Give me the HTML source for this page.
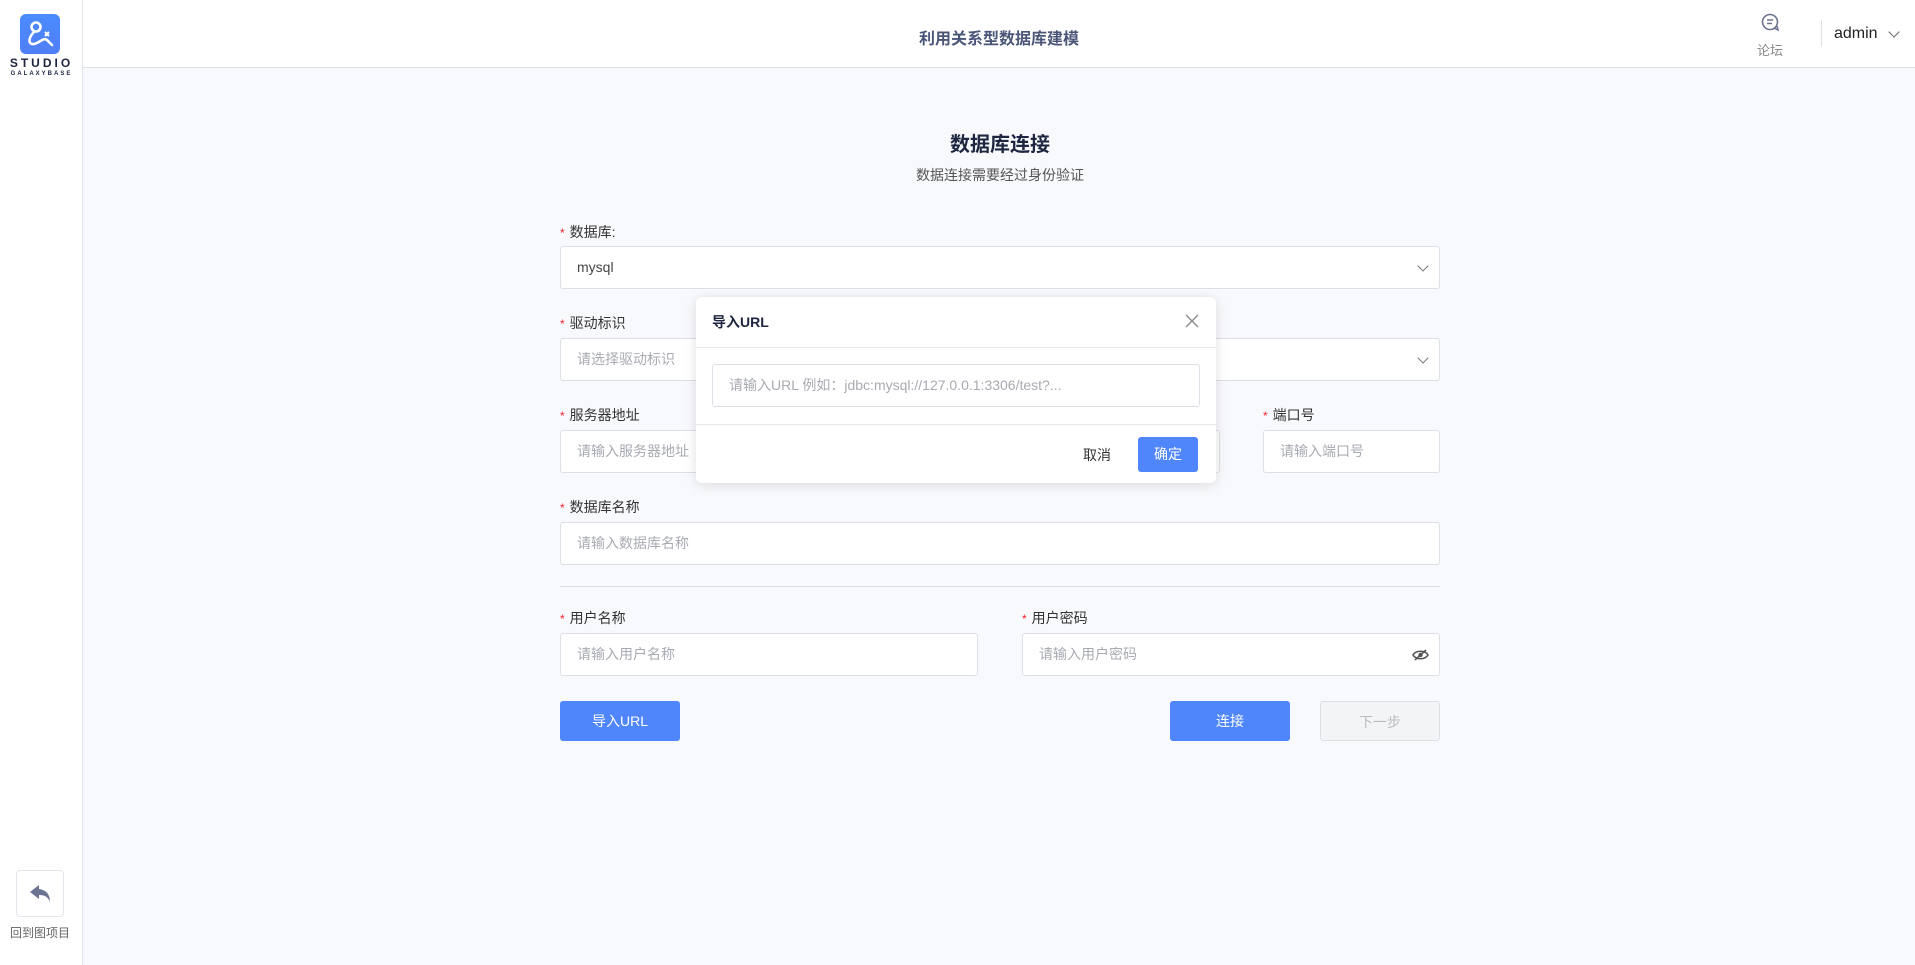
<!DOCTYPE html>
<html><head><meta charset="utf-8"><style>
*{box-sizing:border-box;margin:0;padding:0}
body{width:1915px;height:965px;overflow:hidden;background:#f8f9fc;font-family:"Liberation Sans","Noto Sans CJK SC",sans-serif;position:relative;color:#333}
.abs{position:absolute}
.side{left:0;top:0;width:83px;height:965px;background:#fff;border-right:1px solid #e3e6ee}
.top{left:83px;top:0;right:0;height:68px;background:#fff;border-bottom:1px solid #dfe3ea}
.lbl{font-size:14px;color:#333}
.lbl b{color:#f5222d;font-weight:normal;font-size:12px;margin-right:5px}
.inp{background:#fff;border:1px solid #dcdfe6;border-radius:3px;height:43px;font-size:14px;color:#a8abb2;padding-left:16px;line-height:41px}
.btn{border-radius:3px;height:40px;line-height:40px;text-align:center;font-size:14px;color:#fff;background:#4f86fc}
.chev{position:absolute;right:12px;top:15px;width:8px;height:8px;border-right:1.5px solid #777;border-bottom:1.5px solid #777;transform:rotate(45deg)}
</style></head><body>
<div class="abs side"></div>
<div class="abs" style="left:20px;top:14px;width:40px;height:40px;border-radius:6px;background:linear-gradient(#4a8cff,#4f7ef5)">
<svg width="40" height="40" viewBox="0 0 40 40"><circle cx="16" cy="13" r="4.5" fill="none" stroke="#fff" stroke-width="2.6"/><path d="M14 18 C8 24 8 31 14 30 C20 29 24 22 28 27 L32 31" fill="none" stroke="#fff" stroke-width="2.6" stroke-linecap="round"/><path d="M25 18 l4 4 M29 18 l-4 4" stroke="#fff" stroke-width="2"/></svg></div>
<div class="abs" style="left:0;width:83px;top:56px;text-align:center;font-size:12px;font-weight:bold;letter-spacing:3px;color:#1d2540">STUDIO</div>
<div class="abs" style="left:0;width:83px;top:71px;text-align:center;font-size:6px;font-weight:bold;letter-spacing:2px;color:#1d2540">GALAXYBASE</div>
<div class="abs" style="left:16px;top:870px;width:48px;height:47px;border:1px solid #e3e5ec;border-radius:4px;background:#fff">
<svg width="46" height="45" viewBox="0 0 46 45"><path d="M22 14 L13 21 L22 28 L22 24 C28 24 31 26 33 31 C33 23 29 19 22 18 Z" fill="#6b7390"/></svg></div>
<div class="abs" style="left:0;width:80px;top:924px;text-align:center;font-size:12px;color:#666">回到图项目</div>
<div class="abs top"></div>
<div class="abs" style="left:83px;right:0;top:25px;text-align:center;font-size:16px;font-weight:bold;color:#4a5578">利用关系型数据库建模</div>
<svg class="abs" style="left:1759px;top:12px" width="24" height="22" viewBox="0 0 24 22"><circle cx="11" cy="10" r="7.5" fill="none" stroke="#6b7390" stroke-width="1.6"/><path d="M8 8h6M8 11.5h5" stroke="#6b7390" stroke-width="1.5"/><path d="M15 16 l4 2 -1-4" fill="none" stroke="#6b7390" stroke-width="1.5"/></svg>
<div class="abs" style="left:1757px;top:40px;font-size:13px;color:#888">论坛</div>
<div class="abs" style="left:1821px;top:20px;width:1px;height:27px;background:#dde0e6"></div>
<div class="abs" style="left:1834px;top:25px;font-size:16px;color:#222">admin</div>
<div class="abs" style="left:1890px;top:28px;width:8px;height:8px;border-right:1.5px solid #666;border-bottom:1.5px solid #666;transform:rotate(45deg)"></div>

<div class="abs" style="left:560px;width:880px;top:128px;text-align:center;font-size:20px;font-weight:bold;color:#1d2540">数据库连接</div>
<div class="abs" style="left:560px;width:880px;top:165px;text-align:center;font-size:14px;color:#555">数据连接需要经过身份验证</div>

<div class="abs lbl" style="left:560px;top:222px"><b>*</b>数据库:</div>
<div class="abs inp" style="left:560px;top:246px;width:880px;color:#444">mysql<span class="chev"></span></div>
<div class="abs lbl" style="left:560px;top:313px"><b>*</b>驱动标识</div>
<div class="abs inp" style="left:560px;top:338px;width:880px">请选择驱动标识<span class="chev"></span></div>
<div class="abs lbl" style="left:560px;top:405px"><b>*</b>服务器地址</div>
<div class="abs inp" style="left:560px;top:430px;width:660px">请输入服务器地址</div>
<div class="abs lbl" style="left:1263px;top:405px"><b>*</b>端口号</div>
<div class="abs inp" style="left:1263px;top:430px;width:177px">请输入端口号</div>
<div class="abs lbl" style="left:560px;top:497px"><b>*</b>数据库名称</div>
<div class="abs inp" style="left:560px;top:522px;width:880px">请输入数据库名称</div>
<div class="abs" style="left:560px;top:586px;width:880px;height:1px;background:#dcdfe6"></div>
<div class="abs lbl" style="left:560px;top:608px"><b>*</b>用户名称</div>
<div class="abs inp" style="left:560px;top:633px;width:418px">请输入用户名称</div>
<div class="abs lbl" style="left:1022px;top:608px"><b>*</b>用户密码</div>
<div class="abs inp" style="left:1022px;top:633px;width:418px">请输入用户密码
<svg style="position:absolute;right:10px;top:14px" width="17" height="14" viewBox="0 0 17 14"><path d="M1 7 C4 2 13 2 16 7 C13 12 4 12 1 7Z" fill="none" stroke="#555" stroke-width="1.6"/><circle cx="8.5" cy="7" r="2.2" fill="#555"/><path d="M3 12 L14 2" stroke="#555" stroke-width="1.6"/></svg></div>
<div class="abs btn" style="left:560px;top:701px;width:120px">导入URL</div>
<div class="abs btn" style="left:1170px;top:701px;width:120px">连接</div>
<div class="abs btn" style="left:1320px;top:701px;width:120px;background:#f3f4f6;border:1px solid #dcdfe6;color:#b8bbc2">下一步</div>

<div class="abs" style="left:696px;top:297px;width:520px;height:186px;background:#fff;border-radius:6px;box-shadow:0 2px 12px rgba(0,0,0,.12)">
<div class="abs" style="left:16px;top:15px;font-size:14px;font-weight:bold;color:#1d2540">导入URL</div>
<svg class="abs" style="left:489px;top:17px" width="14" height="14" viewBox="0 0 14 14"><path d="M1 1L13 13M13 1L1 13" stroke="#888" stroke-width="1.3"/></svg>
<div class="abs" style="left:0;top:50px;width:520px;height:1px;background:#e6e8eb"></div>
<div class="abs inp" style="left:16px;top:67px;width:488px;height:43px;font-size:14px">请输入URL 例如：jdbc:mysql://127.0.0.1:3306/test?...</div>
<div class="abs" style="left:0;top:127px;width:520px;height:1px;background:#e6e8eb"></div>
<div class="abs" style="left:387px;top:148px;font-size:14px;color:#333">取消</div>
<div class="abs btn" style="left:442px;top:140px;width:60px;height:35px;line-height:35px">确定</div>
</div>
</body></html>
